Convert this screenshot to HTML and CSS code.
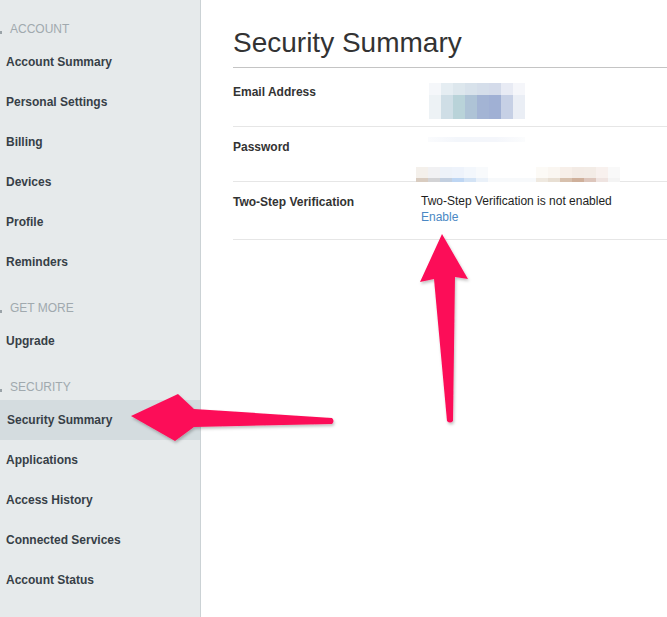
FILE: index.html
```html
<!DOCTYPE html>
<html>
<head>
<meta charset="utf-8">
<link rel="stylesheet" href="styles.css">
</head>
<body>
<div class="page">
  <nav class="sidebar">
    <div class="sec">ACCOUNT</div>
    <div class="item">Account Summary</div>
    <div class="item">Personal Settings</div>
    <div class="item">Billing</div>
    <div class="item">Devices</div>
    <div class="item">Profile</div>
    <div class="item">Reminders</div>
    <div class="sec">GET MORE</div>
    <div class="item">Upgrade</div>
    <div class="sec">SECURITY</div>
    <div class="item active">Security Summary</div>
    <div class="item">Applications</div>
    <div class="item">Access History</div>
    <div class="item">Connected Services</div>
    <div class="item">Account Status</div>
  </nav>
  <main class="main">
    <h1 class="title">Security Summary</h1>
    <div class="row row-email">
      <div class="label">Email Address</div>
      <div class="value">
        <div class="blob-email">
          <span></span><span></span><span></span><span></span><span></span><span></span><span></span><span></span>
          <span></span><span></span><span></span><span></span><span></span><span></span><span></span><span></span>
          <span></span><span></span><span></span><span></span><span></span><span></span><span></span><span></span>
        </div>
      </div>
    </div>
    <div class="row row-pass">
      <div class="label">Password</div>
      <div class="value">
        <div class="faint"></div>
        <div class="strip"><div class="strip-top"></div><div class="strip-bottom"></div></div>
      </div>
    </div>
    <div class="row row-two">
      <div class="label">Two-Step Verification</div>
      <div class="value">
        <div class="status">Two-Step Verification is not enabled</div>
        <a class="enable">Enable</a>
      </div>
    </div>
  </main>
  <svg class="arrows" width="667" height="617" viewBox="0 0 667 617">
    <defs>
      <filter id="sh" x="-20%" y="-20%" width="140%" height="140%">
        <feDropShadow dx="1" dy="2" stdDeviation="1.5" flood-color="#000" flood-opacity="0.25"/>
      </filter>
    </defs>
    <path filter="url(#sh)" fill="#fc1158" d="M131 416 L178 394 L194 409 L332 418 Q335 421 332 424 L194 427 L175 441 Z"/>
    <path filter="url(#sh)" fill="#fc1158" d="M442 234 L468 279 L455 277 L453 421 Q450 424 447 421 L434 279 L420 282 Z"/>
  </svg>
</div>
</body>
</html>
```
FILE: styles.css
```css
html, body {
  margin: 0;
  padding: 0;
  background: #ffffff;
}
body {
  font-family: "Liberation Sans", Arial, sans-serif;
  width: 667px;
  height: 617px;
  overflow: hidden;
}
.page {
  position: relative;
  display: flex;
  width: 667px;
  height: 617px;
}
.sidebar {
  width: 200px;
  flex: 0 0 200px;
  background: #e6eaeb;
  border-right: 1px solid #cbd2d5;
  padding-top: 3px;
  box-sizing: content-box;
}
.sec {
  position: relative;
  height: 39px;
  box-sizing: border-box;
  padding: 19px 0 0 10px;
  line-height: 14px;
  font-size: 12px;
  color: #a0a9ae;
}
.sec::before {
  content: "";
  position: absolute;
  left: 0;
  top: 28px;
  width: 2px;
  height: 3px;
  background: #9aa3a8;
}
.item {
  height: 40px;
  line-height: 40px;
  padding-left: 6px;
  font-size: 12px;
  font-weight: bold;
  color: #373f47;
}
.item.active {
  background: #d4dcdf;
  padding-left: 7px;
}
.main {
  flex: 1;
  padding: 27px 0 0 32px;
  min-width: 0;
}
.title {
  margin: 0;
  font-size: 28px;
  font-weight: normal;
  line-height: 32px;
  color: #333333;
  padding-bottom: 8px;
  border-bottom: 1px solid #c4c4c4;
}
.row {
  display: flex;
  box-sizing: border-box;
  border-bottom: 1px solid #e6e6e6;
}
.row-email { height: 59px; padding-top: 17px; }
.row-pass { height: 55px; padding-top: 13px; }
.row-two { height: 58px; padding-top: 13px; }
.label {
  width: 188px;
  flex: 0 0 188px;
  font-size: 12px;
  font-weight: bold;
  line-height: 14px;
  color: #333333;
}
.value {
  flex: 1;
  font-size: 12px;
}
.blob-email {
  display: grid;
  grid-template-columns: repeat(8, 12px);
  grid-auto-rows: 12px;
  margin: -2px 0 0 8px;
  width: 96px;
}
.blob-email span:nth-child(1) { background: #f5f7fa; }
.blob-email span:nth-child(2) { background: #e5edf2; }
.blob-email span:nth-child(3) { background: #dde7ed; }
.blob-email span:nth-child(4) { background: #d8e2eb; }
.blob-email span:nth-child(5) { background: #d5deea; }
.blob-email span:nth-child(6) { background: #d4dbea; }
.blob-email span:nth-child(7) { background: #e8ebf4; }
.blob-email span:nth-child(8) { background: #f5f6fa; }
.blob-email span:nth-child(9), .blob-email span:nth-child(17) { background: #edf2f5; }
.blob-email span:nth-child(10), .blob-email span:nth-child(18) { background: #cfdee6; }
.blob-email span:nth-child(11), .blob-email span:nth-child(19) { background: #b9d3d9; }
.blob-email span:nth-child(12), .blob-email span:nth-child(20) { background: #aec3d6; }
.blob-email span:nth-child(13), .blob-email span:nth-child(21) { background: #a3b4d4; }
.blob-email span:nth-child(14), .blob-email span:nth-child(22) { background: #a0b0d4; }
.blob-email span:nth-child(15), .blob-email span:nth-child(23) { background: #c6d0e5; }
.blob-email span:nth-child(16), .blob-email span:nth-child(24) { background: #eaeef5; }
.faint {
  margin: -3px 0 0 7px;
  width: 97px;
  height: 5px;
  background: linear-gradient(90deg, #fafbfd 0%, #f3f6fb 30%, #f4f6fb 70%, #fbfcfd 100%);
}
.strip {
  margin: 25px 0 0 -5px;
  width: 204px;
  height: 15px;
}
.strip-top {
  height: 11px;
  background: linear-gradient(90deg,
    #f4f0eb 0 12px, #f1f1f3 12px 24px, #edf2f9 24px 36px, #eef3fb 36px 48px,
    #f3f7fc 48px 60px, #f8fafc 60px 72px, #ffffff 72px 120px, #fcfaf6 120px 132px,
    #faf6f1 132px 144px, #f7efe9 144px 156px, #f3ebe5 156px 168px, #f3ece6 168px 180px,
    #f8f1ee 180px 192px, #f9f9f9 192px 204px);
}
.strip-bottom {
  height: 4px;
  background: linear-gradient(90deg,
    #d9ccc0 0 12px, #d3d3d5 12px 24px, #c2cfe0 24px 36px, #bed6f3 36px 48px,
    #d3e3f5 48px 60px, #eaf1f9 60px 72px, #f7f9fb 72px 120px, #efe9e0 120px 132px,
    #e8dfd3 132px 144px, #d7c0ad 144px 156px, #cfb09b 156px 168px, #ddc6bc 168px 180px,
    #efe4e1 180px 192px, #f4f4f4 192px 204px);
}
.status {
  line-height: 16px;
  margin-top: -2px;
  color: #1e1e1e;
}
.enable {
  display: block;
  line-height: 16px;
  color: #4a88c4;
  cursor: pointer;
}
.arrows {
  position: absolute;
  left: 0;
  top: 0;
  pointer-events: none;
}
```
